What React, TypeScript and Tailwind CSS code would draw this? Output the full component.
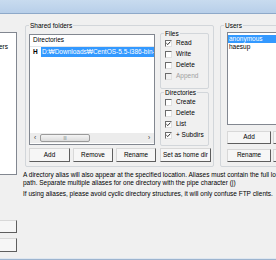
import React from "react";

function Btn({ label, className = "" }: { label?: string; className?: string }) {
  return (
    <div
      className={`flex items-center justify-center bg-[#f6f6f6] border border-t-[#d8d8d8] border-l-[#d8d8d8] border-r-[#5e5e5e] border-b-[#5e5e5e] text-[6.4px] leading-none text-black whitespace-nowrap shrink-0 ${className}`}
    >
      {label}
    </div>
  );
}

function Check({ label, checked = false, disabled = false }: { label: string; checked?: boolean; disabled?: boolean }) {
  return (
    <div className="flex items-center h-[11px]">
      <span
        className={`relative w-[7px] h-[7px] shrink-0 border border-t-[#6b6b6b] border-l-[#6b6b6b] border-r-[#e0e0e0] border-b-[#e0e0e0] ${disabled ? "bg-[#f0f0f0]" : "bg-white"}`}
      >
        {checked && (
          <svg viewBox="0 0 7 7" className="absolute left-0 top-0 w-[5px] h-[5px]">
            <path d="M0.5 3 L2.5 5 L6 1" fill="none" stroke="#222" strokeWidth="1.3" />
          </svg>
        )}
      </span>
      <span className={`ml-[4px] text-[6.5px] leading-none whitespace-nowrap ${disabled ? "text-[#a0a0a0]" : "text-black"}`}>{label}</span>
    </div>
  );
}

function Group({ label, className = "", children }: { label: string; className?: string; children?: React.ReactNode }) {
  return (
    <div className={`relative border border-[#d2d6da] rounded-[2px] shrink-0 ${className}`}>
      <span className="absolute -top-[4px] left-[3px] bg-[#f0f0f0] px-[1px] text-[6.5px] leading-[7px] text-black">{label}</span>
      {children}
    </div>
  );
}

export default function App() {
  return (
    <div className="w-[276px] h-[260px] bg-[#f0f0f0] overflow-hidden flex flex-col font-['Liberation_Sans',Arial,sans-serif] text-black">
      {/* title bar */}
      <div className="h-[14px] shrink-0 bg-gradient-to-b from-[#c8dbef] to-[#b8cfe9] border-b border-[#8ea9c9]" />

      <div className="flex h-[244px] shrink-0">
        {/* left column (clipped) */}
        <div className="w-[17px] shrink-0 flex flex-col">
          <div className="mt-[18px] h-[143px] bg-white border-y border-r border-[#828790] text-[6.5px] leading-none pt-[11px] overflow-hidden">
            <span className="block -ml-[1px]">ers</span>
          </div>
          <Btn className="mt-[45px] h-[13px] w-[17px] border-l-0" />
          <Btn className="mt-[5px] h-[14px] w-[17px] border-l-0" />
        </div>

        {/* right area */}
        <div className="ml-[6px] w-[290px] shrink-0 flex flex-col">
          <div className="flex mt-[11px]">
            <Group label="Shared folders" className="ml-[2px] w-[189px] h-[142px] pt-[8px] pl-[3px]">
              <div className="flex h-[111px]">
                {/* directories listview */}
                <div className="w-[126px] h-[111px] bg-white border border-[#828790] flex flex-col overflow-hidden">
                  <div className="h-[12px] shrink-0 flex items-center pl-[3px] border-b border-[#e3e6ea] text-[6.5px] leading-none">
                    Directories
                  </div>
                  <div className="flex items-center h-[10px] pl-[3px] text-[6.5px] leading-none">
                    <span className="font-bold w-[8px] shrink-0">H</span>
                    <span className="bg-[#3399ff] text-white h-[10px] flex items-center pl-[1px] whitespace-nowrap flex-1 overflow-hidden">
                      D:₩Downloads₩CentOS-5.5-i386-bin-
                    </span>
                  </div>
                  <div className="flex-1" />
                  {/* horizontal scrollbar */}
                  <div className="h-[10px] shrink-0 flex items-center bg-[#ececec] mb-[1px]">
                    <span className="w-[10px] text-center text-[6.5px] leading-none text-[#333]">‹</span>
                    <div className="w-[50px] h-[8px] bg-gradient-to-b from-[#f4f4f4] to-[#dcdcdc] border border-[#9a9a9a] rounded-[2px] flex items-center justify-center">
                      <span className="text-[4px] leading-none text-[#666]">|||</span>
                    </div>
                    <div className="flex-1" />
                    <span className="w-[10px] text-center text-[6.5px] leading-none text-[#333]">›</span>
                  </div>
                </div>

                {/* files / directories permissions */}
                <div className="ml-[5px] w-[49px] flex flex-col">
                  <Group label="Files" className="-mt-[1px] w-[49px] h-[56px] pt-[4px] pl-[4px]">
                    <Check label="Read" checked />
                    <Check label="Write" />
                    <Check label="Delete" />
                    <Check label="Append" disabled />
                  </Group>
                  <Group label="Directories" className="mt-[3px] w-[49px] h-[54px] pt-[4px] pl-[4px]">
                    <Check label="Create" />
                    <Check label="Delete" />
                    <Check label="List" checked />
                    <Check label="+ Subdirs" checked />
                  </Group>
                </div>
              </div>

              <div className="flex mt-[3px]">
                <Btn label="Add" className="w-[41px] h-[14px]" />
                <Btn label="Remove" className="ml-[3px] w-[40px] h-[14px]" />
                <Btn label="Rename" className="ml-[3px] w-[40px] h-[14px]" />
                <Btn label="Set as home dir" className="ml-[4px] w-[51px] h-[14px]" />
              </div>
            </Group>

            <Group label="Users" className="ml-[6px] w-[70px] h-[142px] pt-[6px] pl-[6px]">
              <div className="w-[62px] h-[93px] bg-white border border-[#828790] pt-[2px] text-[6.5px] leading-none">
                <div className="h-[8px] bg-[#3399ff] text-white flex items-center pl-[1px]">anonymous</div>
                <div className="h-[8px] flex items-center pl-[1px]">haesup</div>
              </div>
              <div className="flex mt-[6px]">
                <Btn label="Add" className="w-[44px] h-[13px]" />
                <Btn className="ml-[2px] w-[20px] h-[13px]" />
              </div>
              <div className="flex mt-[5px]">
                <Btn label="Rename" className="w-[44px] h-[13px]" />
                <Btn className="ml-[2px] w-[20px] h-[13px]" />
              </div>
            </Group>
          </div>

          <div className="mt-[4px] text-[6.5px] leading-[8px] whitespace-nowrap">
            <div>A directory alias will also appear at the specified location. Aliases must contain the full location</div>
            <div>path. Separate multiple aliases for one directory with the pipe character (|)</div>
            <div className="mt-[3px]">If using aliases, please avoid cyclic directory structures, it will only confuse FTP clients.</div>
          </div>
        </div>
      </div>

      <div className="flex-1 bg-[#9db4cf] border-t border-[#dfe7f0]" />
    </div>
  );
}
